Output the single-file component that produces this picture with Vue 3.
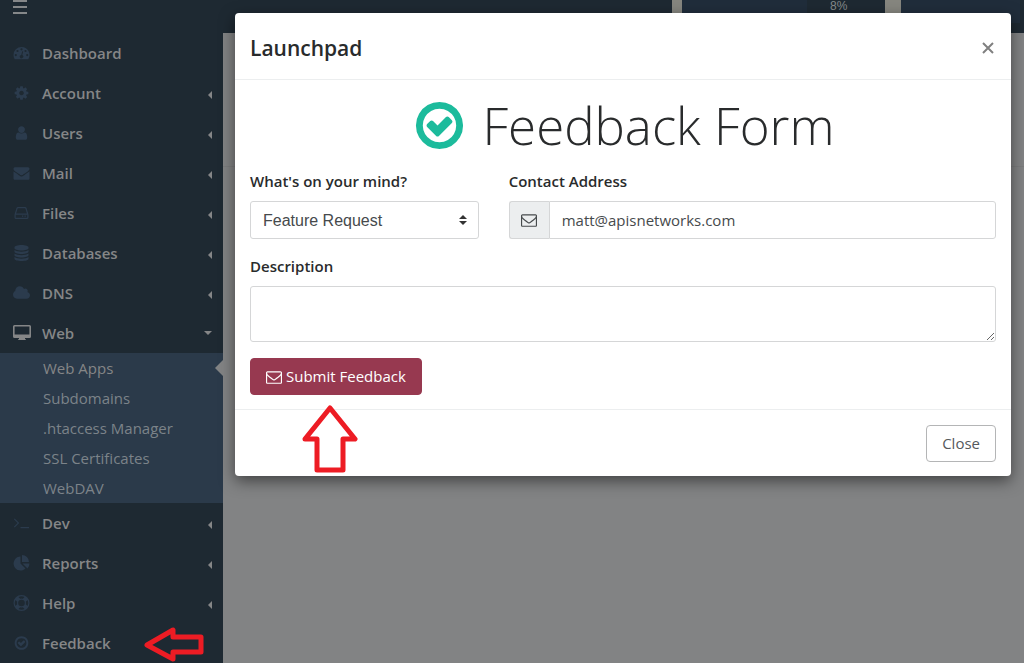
<script setup>
import { ref } from 'vue'

const FA = '0 0 1792 1792'
const circleCheck =
  'M1299 813l-422 422q-19 19-45 19t-45-19l-294-294q-19-19-19-45t19-45l102-102q19-19 45-19t45 19l147 147 275-275q19-19 45-19t45 19l102 102q19 19 19 45t-19 45zm141 83q0-148-73-273t-198-198-273-73-273 73-198 198-73 273 73 273 198 198 273 73 273-73 198-198 73-273zm224 0q0 209-103 385.5t-279.5 279.5-385.5 103-385.5-103-279.5-279.5-103-385.5 103-385.5 279.5-279.5 385.5-103 385.5 103 279.5 279.5 103 385.5z'
const envelopeOutline =
  'M1664 1504v-768q-32 36-69 66-268 206-426 338-51 43-83 67t-86.5 48.5-102.5 24.5h-2q-48 0-102.5-24.5t-86.5-48.5-83-67q-158-132-426-338-37-30-69-66v768q0 13 9.5 22.5t22.5 9.5h1472q13 0 22.5-9.5t9.5-22.5zm0-1051v-24.5l-.5-13-3-12.5-5.5-9-9-7.5-14-2.5h-1472q-13 0-22.5 9.5t-9.5 22.5q0 168 147 284 193 152 401 317 6 5 35 29.5t46 37.5 44.5 31.5 50.5 27.5 43 9h2q20 0 43-9t50.5-27.5 44.5-31.5 46-37.5 35-29.5q208-165 401-317 54-43 100.5-115.5t46.5-131.5zm128-37v1088q0 66-47 113t-113 47h-1472q-66 0-113-47t-47-113v-1088q0-66 47-113t113-47h1472q66 0 113 47t47 113z'

const items = [
  { name: 'Dashboard', box: '0 0 16 16', d: 'M8 2a8 8 0 0 0-8 8c0 1.6.4 3 1.200 4.200h13.600A8 8 0 0 0 8 2zM2.300 9a1.100 1.100 0 1 1 0 2.200a1.100 1.100 0 0 1 0-2.200zM4 4.900a1.100 1.100 0 1 1 0 2.200a1.100 1.100 0 0 1 0-2.200zM8 3.200a1.100 1.100 0 1 1 0 2.200a1.100 1.100 0 0 1 0-2.200zM12 4.900a1.100 1.100 0 1 1 0 2.200a1.100 1.100 0 0 1 0-2.200zM13.700 9a1.100 1.100 0 1 1 0 2.200a1.100 1.100 0 0 1 0-2.200zM8.700 6.300l.9.200-.8 3.600a1.700 1.700 0 1 1-1-.2z' },
  { name: 'Account', more: true, box: FA, d: 'M1152 896q0-106-75-181t-181-75-181 75-75 181 75 181 181 75 181-75 75-181zm512-109v222q0 12-8 23t-20 13l-185 28q-19 54-39 91 35 50 107 138 10 12 10 25t-9 23q-27 37-99 108t-94 71q-12 0-26-9l-138-108q-44 23-91 38-16 136-29 186-7 28-36 28h-222q-14 0-24.5-8.5t-11.5-21.5l-28-184q-49-16-90-37l-141 107q-10 9-25 9-14 0-25-11-126-114-165-168-7-10-7-23 0-12 8-23 15-21 51-66.5t54-70.5q-27-50-41-99l-183-27q-13-2-21-12.5t-8-23.5v-222q0-12 8-23t19-13l186-28q14-46 39-92-40-57-107-138-10-12-10-24 0-10 9-23 26-36 98.5-107.5t94.5-71.5q13 0 26 10l138 107q44-23 91-38 16-136 29-186 7-28 36-28h222q14 0 24.5 8.5t11.5 21.5l28 184q49 16 90 37l142-107q9-9 24-9 13 0 25 10 129 119 165 170 7 8 7 22 0 12-8 23-15 21-51 66.5t-54 70.5q26 50 41 98l183 28q13 2 21 12.5t8 23.5z' },
  { name: 'Users', more: true, box: FA, d: 'M1536 1399q0 109-62.5 187t-150.5 78h-854q-88 0-150.5-78t-62.5-187q0-85 8.5-160.5t31.5-152 58.5-131 94-89 134.5-34.5q131 128 313 128t313-128q76 0 134.5 34.5t94 89 58.5 131 31.5 152 8.500 160.500zm-256-887q0 159-112.5 271.5t-271.5 112.5-271.5-112.5-112.5-271.5 112.5-271.5 271.5-112.5 271.5 112.5 112.5 271.5z' },
  { name: 'Mail', more: true, box: FA, d: 'M1792 710v794q0 66-47 113t-113 47h-1472q-66 0-113-47t-47-113v-794q44 49 101 87 362 246 497 345 57 42 92.5 65.5t94.5 48 110 24.5h2q51 0 110-24.5t94.5-48 92.5-65.5q170-123 498-345 57-39 100-87zm0-294q0 79-49 151t-122 123q-376 261-468 325-10 7-42.5 31t-54 38-52 32.5-57.5 27-50 9h-2q-23 0-50-9t-57.5-27-52-32.5-54-38-42.5-31q-91-64-262-182.5t-205-142.5q-62-42-117-115.5t-55-136.5q0-78 41.5-130t118.5-52h1472q65 0 112.5 47t47.5 113z' },
  { name: 'Files', more: true, box: '0 0 16 16', d: 'M4.500 2h7q1.200 0 1.500 1l1.700 5.500q.3.800.3 1.500v2.500q0 1.500-1.500 1.500h-11Q1 14 1 12.500V10q0-.7.3-1.500L3 3q.3-1 1.500-1zM4.600 3.200q-.4 0-.5.300L2.600 8.500h10.800L11.900 3.500q-.1-.3-.5-.3zM2.200 9.700v2.700q0 .4.400.4h10.800q.4 0 .4-.4V9.700zM8.500 10.600h1.300v1.200H8.500zM11 10.600h1.300v1.200H11z' },
  { name: 'Databases', more: true, box: '0 0 16 16', d: 'M8 0c4 0 7 1 7 2.300v1C15 4.500 12 5.500 8 5.500S1 4.500 1 3.300v-1C1 1 4 0 8 0zM1 5c1.500 1.100 4 1.700 7 1.700S13.500 6.100 15 5v1.800C15 8 12 9 8 9S1 8 1 6.800zM1 8.500c1.500 1.100 4 1.700 7 1.700s5.500-.6 7-1.700v1.800c0 1.200-3 2.200-7 2.200s-7-1-7-2.200zM1 12c1.500 1.100 4 1.700 7 1.700s5.500-.6 7-1.700v1.700C15 15 12 16 8 16s-7-1-7-2.300z' },
  { name: 'DNS', more: true, box: '0 0 1920 1792', d: 'M1920 1152q0 159-112.5 271.5t-271.5 112.5h-1088q-185 0-316.5-131.5t-131.5-316.5q0-132 71-241.5t187-163.5q-2-28-2-43 0-212 150-362t362-150q158 0 286.5 88t187.5 230q70-62 166-62 106 0 181 75t75 181q0 75-41 138 129 30 213 134.5t84 239.5z' },
  {
    name: 'Web', open: true, box: '0 0 18 16', d: 'M1.500 0h15Q18 0 18 1.500v10q0 1.500-1.500 1.500H12v1q1 .2 1 1H5q0-.8 1-1v-1H1.500Q0 13 0 11.500v-10Q0 0 1.500 0zM1.600 1.400v8.200h14.800V1.400z',
    children: ['Web Apps', 'Subdomains', '.htaccess Manager', 'SSL Certificates', 'WebDAV']
  },
  { name: 'Dev', more: true, box: '0 0 16 16', d: 'M1.200 3.500L5.700 8l-4.500 4.500-.8-.8L4.100 8 .4 4.300zM7 12h8.500v1.200H7z' },
  { name: 'Reports', more: true, box: '0 0 16 16', d: 'M7 1.500V8.500l5 5A7 7 0 1 1 7 1.500zM8.500 0A7 7 0 0 1 15.500 7H8.500zM9 8.500h7a7 7 0 0 1-2 4.900z' },
  { name: 'Help', more: true, box: '0 0 16 16', d: 'M8 0a8 8 0 1 1 0 16A8 8 0 0 1 8 0zM8 1.200a6.800 6.800 0 0 0-3 .7L6.700 3.700a4.500 4.500 0 0 1 2.600 0L11 1.900a6.800 6.800 0 0 0-3-.7zM1.900 5a6.800 6.800 0 0 0 0 6l1.800-1.700a4.500 4.500 0 0 1 0-2.600zM14.100 5l-1.800 1.700a4.500 4.500 0 0 1 0 2.600L14.100 11a6.800 6.800 0 0 0 0-6zM8 4.700a3.300 3.300 0 1 0 0 6.600a3.300 3.300 0 0 0 0-6.600zM6.700 12.300L5 14.100a6.800 6.800 0 0 0 6 0l-1.700-1.800a4.500 4.500 0 0 1-2.600 0z' },
  { name: 'Feedback', box: FA, d: circleCheck, pointed: true }
]

const topic = ref('Feature Request')
const address = ref('matt@apisnetworks.com')
const description = ref('')
</script>

<template>
  <div class="page">
    <header class="topbar">
      <button class="menu-toggle" type="button" aria-label="Toggle menu"><span></span><span></span><span></span></button>
      <div class="meters">
        <div class="meter"><div class="fill"></div><div class="rest">8%</div></div>
        <div class="meter second"></div>
      </div>
    </header>

    <aside class="sidebar">
      <nav>
        <ul class="nav-list">
          <li v-for="item in items" :key="item.name">
            <a href="#" class="nav-link" :class="{ open: item.open }">
              <svg class="nav-icon" :viewBox="item.box" aria-hidden="true"><path fill-rule="evenodd" :d="item.d" /></svg>
              <span class="nav-text">{{ item.name }}</span>
              <svg v-if="item.more" class="caret" viewBox="0 0 4 8" width="4" height="8" aria-hidden="true"><path d="M4 0v8L0 4z" /></svg>
              <svg v-if="item.open" class="caret" viewBox="0 0 8 4" width="8" height="4" aria-hidden="true"><path d="M0 0h8L4 4z" /></svg>
              <svg v-if="item.pointed" class="arrow-left" viewBox="0 0 60 36" aria-hidden="true"><path d="M3 20L29 5V12H57V27H29V34Z" /></svg>
            </a>
            <ul v-if="item.children" class="sub-list">
              <li v-for="(child, i) in item.children" :key="child">
                <a href="#" class="sub-link" :class="{ current: i === 0 }">{{ child }}</a>
              </li>
            </ul>
          </li>
        </ul>
      </nav>
    </aside>
    <main class="content"><div class="content-head"></div></main>

    <div class="overlay">
      <section class="modal" role="dialog" aria-labelledby="dialog-title">
        <div class="modal-header">
          <h4 id="dialog-title">Launchpad</h4>
          <button type="button" class="dismiss" aria-label="Dismiss">
            <svg viewBox="0 0 12 12" width="12" height="12" aria-hidden="true"><path d="M1 1L11 11M11 1L1 11" /></svg>
          </button>
        </div>
        <form class="modal-body" @submit.prevent>
          <h1>
            <svg :viewBox="FA" aria-hidden="true"><path :d="circleCheck" /></svg>
            <span>Feedback Form</span>
          </h1>
          <div class="row">
            <div class="col">
              <label for="topic">What's on your mind?</label>
              <div class="select-wrap">
                <select id="topic" v-model="topic" class="control"><option>Feature Request</option></select>
                <svg viewBox="0 0 8 10" width="8" height="10" aria-hidden="true"><path d="M4 0l4 4H0zM0 6h8l-4 4z" /></svg>
              </div>
            </div>
            <div class="col">
              <label for="address">Contact Address</label>
              <div class="input-group">
                <span class="addon"><svg :viewBox="FA" width="16" height="16" aria-hidden="true"><path :d="envelopeOutline" /></svg></span>
                <input id="address" v-model="address" type="email" class="control">
              </div>
            </div>
          </div>
          <div class="group">
            <label for="description">Description</label>
            <textarea id="description" v-model="description" class="control" rows="2"></textarea>
          </div>
          <div class="submit-wrap">
            <button type="submit" class="btn primary"><svg :viewBox="FA" width="16" height="16" aria-hidden="true"><path :d="envelopeOutline" /></svg>Submit Feedback</button>
            <svg class="arrow-up" viewBox="0 0 56 68" aria-hidden="true"><path d="M28 3L53 34H41V65H15V34H3Z" /></svg>
          </div>
        </form>
        <div class="modal-footer"><button type="button" class="btn outline">Close</button></div>
      </section>
    </div>
  </div>
</template>

<style>
html, body { margin: 0; background: #828384; }
</style>

<style scoped>
* { box-sizing: border-box; }
.page {
  display: grid;
  grid-template: 33px 1fr / 223px 1fr;
  height: 100vh;
  overflow: hidden;
  position: relative;
  background: #828384;
  color: #292b2c;
  font: 15px/23px "Segoe UI", "Open Sans", sans-serif;
}
ul { list-style: none; margin: 0; padding: 0; }
.topbar { grid-column: 1 / 3; display: flex; justify-content: space-between; align-items: flex-start; background: #1e2932; }
.menu-toggle { display: grid; gap: 4px; margin: 0 0 0 13px; padding: 0; border: 0; background: none; }
.menu-toggle span { width: 14px; height: 2px; background: #858789; }
.meters { display: flex; gap: 16px; height: 23px; padding-left: 10px; margin-right: 4px; background: #86867f; }
.meter { display: flex; width: 203px; background: #202d3b; }
.meter.second { width: 119px; }
.fill { flex: 1; }
.rest { width: 78px; padding-left: 23px; background: #1e2932; color: #85898c; font: 12px/12px "Liberation Sans", Arial, sans-serif; }
.sidebar { background: #1e2932; }
.nav-link { display: flex; align-items: center; height: 40px; padding: 0 11px 0 13px; color: #858687; font-weight: 600; text-decoration: none; }
.nav-icon { width: 17px; height: 16px; margin-right: 12px; fill: #2b3b4d; }
.open .nav-icon { fill: #858687; width: 18px; margin-right: 11px; }
.nav-text { flex: 1; }
.caret { fill: #858687; position: relative; top: 2px; }
.open .caret { top: 0; }
.sub-list { background: #2b3a4a; }
.sub-link { display: block; position: relative; height: 30px; padding-left: 43px; line-height: 30px; color: #7c8389; text-decoration: none; }
.current { color: #858687; }
.current::after { content: ""; position: absolute; right: 0; top: 7px; border: 8px solid transparent; border-left: 0; border-right-color: #828384; }
.content-head { height: 134px; border-bottom: 1px solid #7b7c7d; }
.overlay { position: absolute; inset: 0; padding: 13px 13px 0 235px; }
.modal { background: #fff; border-radius: 4px; box-shadow: 0 5px 15px rgba(0, 0, 0, .5); }
.modal-header { display: flex; align-items: center; justify-content: space-between; height: 67px; padding: 3px 15px 0; border-bottom: 1px solid #eceeef; }
h4 { margin: 0; font-size: 21px; line-height: 32px; font-weight: 600; }
.dismiss { display: flex; padding: 2px; border: 0; background: none; }
.dismiss path { stroke: #808080; stroke-width: 2; fill: none; }
.modal-body { padding: 15px 15px 14px; border-bottom: 1px solid #eceeef; }
h1 { display: flex; justify-content: center; align-items: flex-start; gap: 16px; height: 67px; margin: 0 0 8px; font-weight: 300; font-size: 51px; line-height: 61px; }
h1 svg { width: 55px; height: 55px; fill: #1cbb9c; margin-top: 3px; }
.row { display: grid; grid-template-columns: 1fr 2fr; margin: 0 -15px 16px; }
.col { padding: 0 15px; }
.group { margin-bottom: 16px; }
label { display: block; margin-bottom: 8px; font-size: 15px; font-weight: 600; }
.control { display: block; width: 100%; height: 38px; margin: 0; padding: 0 12px; border: 1px solid #d5d6d7; border-radius: 3px; background: #fff; color: #464a4c; font: inherit; outline: 0; }
.select-wrap { position: relative; }
select.control { appearance: none; font: 16px "Liberation Sans", Arial, sans-serif; }
.select-wrap svg { position: absolute; right: 12px; top: 14px; fill: #333; pointer-events: none; }
.input-group { display: flex; }
.addon { display: flex; align-items: center; justify-content: center; flex: none; width: 40px; border: 1px solid #d5d6d7; border-right: 0; border-radius: 3px 0 0 3px; background: #eceeef; }
.addon svg { fill: #464a4c; }
.input-group .control { border-radius: 0 3px 3px 0; }
textarea.control { height: 56px; padding: 6px 12px; resize: vertical; }
.submit-wrap { position: relative; }
.btn { display: inline-flex; align-items: center; height: 37px; padding: 0 15px; border: 1px solid; border-radius: 4px; font: inherit; vertical-align: top; }
.primary { gap: 4px; border-color: #973950; background: #973950; color: #fff; }
.primary svg { fill: #fff; }
.outline { border-color: #b4b5b6; background: #fff; color: #55595c; }
.modal-footer { display: flex; justify-content: flex-end; padding: 15px 15px 14px; }
.arrow-left { width: 60px; height: 36px; margin-right: 8px; overflow: visible; }
.arrow-up { position: absolute; left: 52px; top: 47px; width: 56px; height: 68px; }
.arrow-left path, .arrow-up path { fill: none; stroke: #ed1c24; stroke-width: 5; stroke-linejoin: round; }
</style>
